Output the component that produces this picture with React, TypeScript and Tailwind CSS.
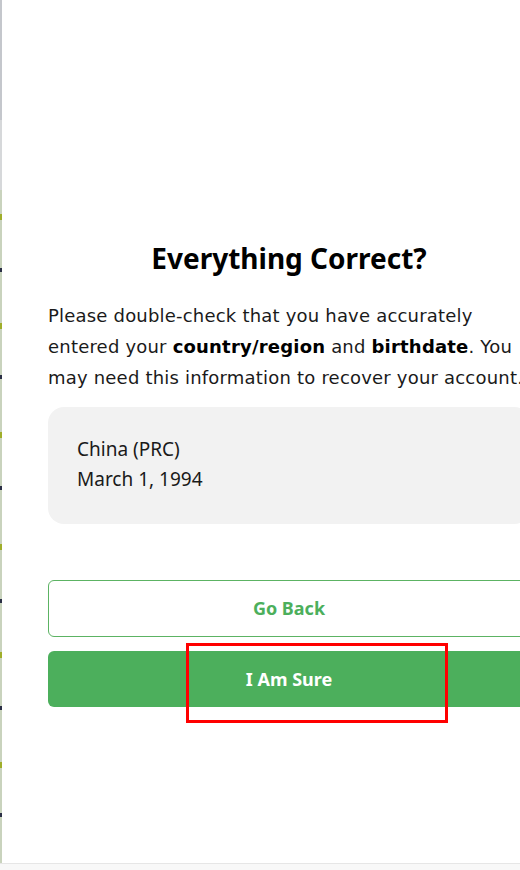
import React from "react";

// strip of the page behind the dialog, only 2px of it shows
function BackdropEdge() {
  const marks = [217, 271, 326, 378, 435, 489, 547, 602, 655, 709, 765, 816];
  return (
    <div className="relative w-[2px] shrink-0 bg-[#c9d3bd]">
      <div className="h-[120px] bg-[#c4c7cc]" />
      <div className="h-[70px] bg-[#d6d8da]" />
      {marks.map((y, i) => (
        <div
          key={y}
          className={
            i % 2 === 0
              ? "absolute left-0 h-[6px] w-[2px] bg-[#9fae2a]"
              : "absolute left-0 h-[4px] w-[2px] bg-[#2b2f45]"
          }
          style={{ top: y - 3 }}
        />
      ))}
    </div>
  );
}

export default function App() {
  return (
    <div className="relative flex h-[870px] w-[520px] flex-col overflow-hidden bg-white font-['Noto_Sans',sans-serif]">
      <div className="flex h-[863px] w-full">
        <BackdropEdge />
        <div className="flex-1 overflow-hidden bg-white pl-[46px] pt-[240px]">
          <div className="flex w-[482px] flex-col">
            <h1 className="text-center text-[28px] font-bold leading-[36px] text-black">
              Everything Correct?
            </h1>
            <p className="mt-[24px] font-['DejaVu_Sans',sans-serif] text-[18px] leading-[31px] tracking-[0.2px] text-[#1a1a1a]">
              Please double-check that you have accurately entered your{" "}
              <span className="font-bold text-black">country/region</span> and{" "}
              <span className="font-bold text-black">birthdate</span>. You may need this
              information to recover your account.
            </p>
            <div className="mt-[14px] rounded-2xl bg-[#f2f2f2] pb-[30px] pl-[29px] pt-[27px] text-[19px] leading-[30px] text-[#1a1a1a]">
              <div>China (PRC)</div>
              <div>March 1, 1994</div>
            </div>
            <button className="mt-[56px] flex h-[57px] items-center justify-center rounded-md border border-[#5cb363] bg-white text-[18px] font-bold text-[#4caf5c]">
              Go Back
            </button>
            <button className="mt-[14px] flex h-[56px] items-center justify-center rounded-md bg-[#4caf5c] text-[18px] font-bold text-white">
              I Am Sure
            </button>
          </div>
        </div>
      </div>
      <div className="flex-1 border-t border-[#e6e6e6] bg-[#f8f8f8]" />
      {/* annotation box drawn over the screenshot */}
      <div className="absolute left-[186px] top-[643px] h-[80px] w-[262px] border-[3px] border-[#ff0000]" />
    </div>
  );
}
